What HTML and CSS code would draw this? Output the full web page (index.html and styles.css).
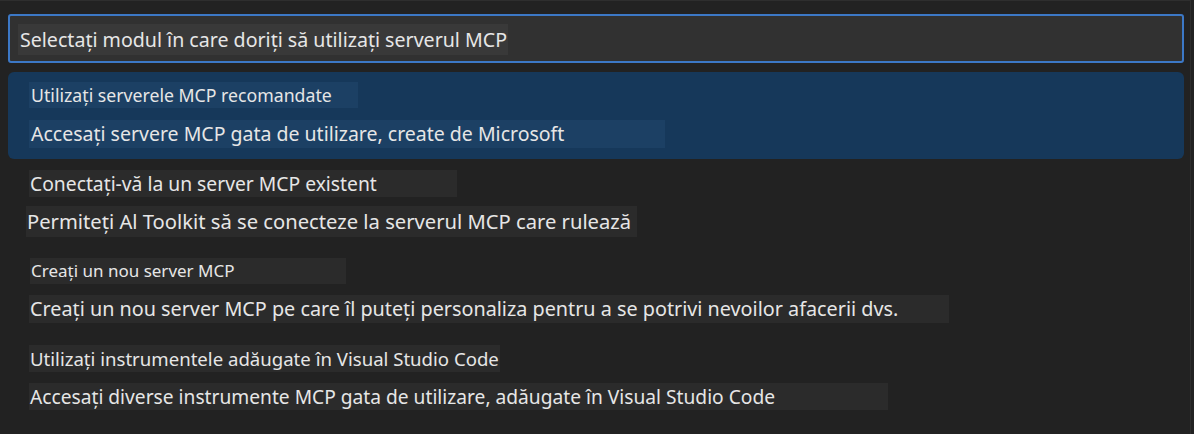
FILE: index.html
```html
<!DOCTYPE html>
<html lang="ro">
<head>
<meta charset="utf-8">
<title>Quick pick</title>
<link rel="stylesheet" href="styles.css">
</head>
<body>
<div class="widget">
  <div class="input">
    <span class="patch input-text">Selectați modul în care doriți să utilizați serverul MCP</span>
  </div>
  <div class="option selected">
    <span class="patch p-rec">Utilizați serverele MCP recomandate</span>
    <span class="patch p-ms">Accesați servere MCP gata de utilizare, create de Microsoft</span>
  </div>
  <div class="option opt-connect">
    <span class="patch p-con">Conectați-vă la un server MCP existent</span>
    <span class="patch p-perm">Permiteți Al Toolkit să se conecteze la serverul MCP care rulează</span>
  </div>
  <div class="option opt-create">
    <span class="patch p-new">Creați un nou server MCP</span>
    <span class="patch p-newd">Creați un nou server MCP pe care îl puteți personaliza pentru a se potrivi nevoilor afacerii dvs.</span>
  </div>
  <div class="option opt-tools">
    <span class="patch p-tools">Utilizați instrumentele adăugate în Visual Studio Code</span>
    <span class="patch p-toolsd">Accesați diverse instrumente MCP gata de utilizare, adăugate în Visual Studio Code</span>
  </div>
</div>
</body>
</html>
```
FILE: styles.css
```css
html, body {
  margin: 0;
  padding: 0;
  background: #222222;
  height: 100%;
}
body {
  font-family: "Noto Sans", "Open Sans", sans-serif;
  color: #e6e6e6;
  overflow: hidden;
}
.widget {
  width: 1191px;
  height: 434px;
  box-sizing: border-box;
  border-top: 1px solid #2e2e2e;
  border-right: 1px solid #2e2e2e;
  padding: 13px 6px 0 8px;
  display: flex;
  flex-direction: column;
}
.input {
  height: 49px;
  box-sizing: border-box;
  border: 2px solid #3c78c6;
  border-radius: 3px;
  background: #313131;
  padding: 8px 0 0 8px;
  margin-bottom: 9px;
}
.patch {
  display: block;
  box-sizing: border-box;
  white-space: nowrap;
  overflow: hidden;
  background: #2b2b2b;
  padding-left: 1px;
  margin-left: 21px;
}
.input-text {
  background: #393939;
  margin-left: 0;
  padding-left: 2px;
  width: 490px;
  height: 31px;
  line-height: 31px;
  font-size: 19.6px;
}
.option {
  display: flex;
  flex-direction: column;
  gap: 11px;
  padding: 11px 0 10px;
}
.selected {
  background: #16385a;
  border-radius: 6px;
  padding: 10px 0 11px;
  gap: 12px;
}
.selected .patch {
  background: #1c4064;
  padding-left: 2px;
}
.opt-connect { gap: 9px; padding-bottom: 10px; }
.opt-create { padding-bottom: 11px; }

.p-rec   { width: 329px; height: 26px; line-height: 26px; font-size: 17.7px; }
.p-ms    { width: 636px; height: 28px; line-height: 28px; font-size: 19.5px; }
.p-con   { width: 428px; height: 27px; line-height: 27px; font-size: 19.3px; }
.p-perm  { width: 611px; height: 31px; line-height: 31px; font-size: 20.2px; margin-left: 18px; }
.p-new   { width: 316px; height: 26px; line-height: 26px; font-size: 17px; margin-left: 22px; }
.p-newd  { width: 920px; height: 28px; line-height: 28px; font-size: 19.8px; }
.p-tools { width: 471px; height: 27px; line-height: 27px; font-size: 18.6px; }
.p-toolsd{ width: 859px; height: 27px; line-height: 27px; font-size: 19.2px; }
```
